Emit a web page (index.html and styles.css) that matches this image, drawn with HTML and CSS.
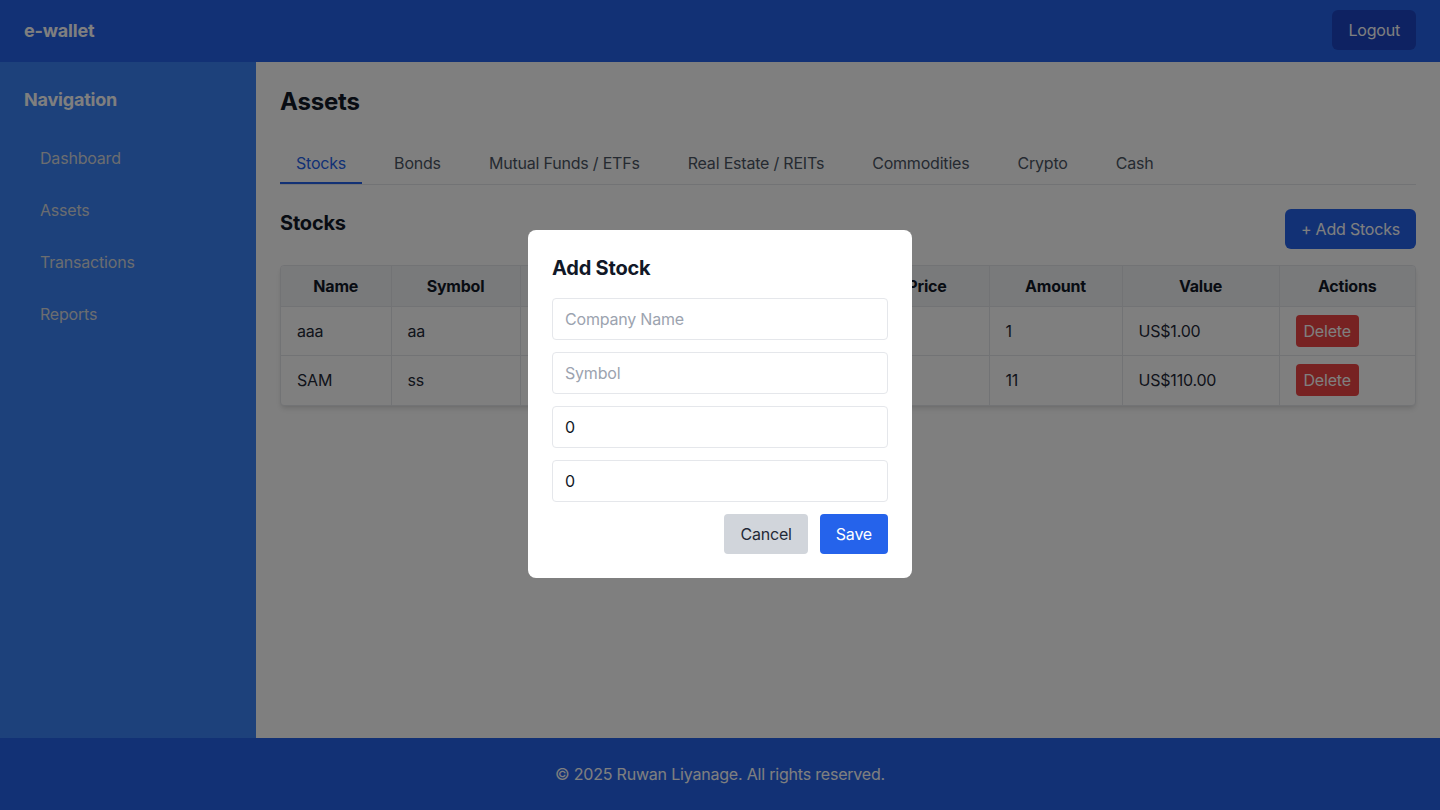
FILE: index.html
```html
<!DOCTYPE html>
<html lang="en">
<head>
<meta charset="utf-8">
<title>e-wallet</title>
<link rel="stylesheet" href="styles.css">
</head>
<body>
<div class="app">
  <header class="topbar">
    <div class="brand">e-wallet</div>
    <button class="logout">Logout</button>
  </header>
  <div class="middle">
    <aside class="sidebar">
      <h2 class="side-title">Navigation</h2>
      <nav class="side-nav">
        <a class="side-link">Dashboard</a>
        <a class="side-link">Assets</a>
        <a class="side-link">Transactions</a>
        <a class="side-link">Reports</a>
      </nav>
    </aside>
    <main class="main">
      <h1 class="page-title">Assets</h1>
      <div class="tabs">
        <div class="tab active">Stocks</div>
        <div class="tab">Bonds</div>
        <div class="tab">Mutual Funds / ETFs</div>
        <div class="tab">Real Estate / REITs</div>
        <div class="tab">Commodities</div>
        <div class="tab">Crypto</div>
        <div class="tab">Cash</div>
      </div>
      <div class="section-head">
        <h2 class="section-title">Stocks</h2>
        <button class="add-btn">+ Add Stocks</button>
      </div>
      <div class="table-wrap">
        <table class="grid">
          <colgroup>
            <col class="c-name"><col class="c-symbol"><col class="c-date"><col class="c-buy"><col class="c-price"><col class="c-amount"><col class="c-value"><col class="c-actions">
          </colgroup>
          <thead>
            <tr><th>Name</th><th>Symbol</th><th>Purchase Date</th><th>Purchase Price</th><th>Price</th><th>Amount</th><th>Value</th><th>Actions</th></tr>
          </thead>
          <tbody>
            <tr><td>aaa</td><td>aa</td><td>2025-01-01</td><td>US$1.00</td><td>1</td><td>1</td><td>US$1.00</td><td><button class="del">Delete</button></td></tr>
            <tr><td>SAM</td><td>ss</td><td>2025-01-01</td><td>US$10.00</td><td>10</td><td>11</td><td>US$110.00</td><td><button class="del">Delete</button></td></tr>
          </tbody>
        </table>
      </div>
    </main>
  </div>
  <footer class="footer">© 2025 Ruwan Liyanage. All rights reserved.</footer>
</div>
<div class="overlay">
  <div class="modal">
    <h3 class="modal-title">Add Stock</h3>
    <div class="fields">
      <input class="field" placeholder="Company Name">
      <input class="field" placeholder="Symbol">
      <input class="field" value="0">
      <input class="field" value="0">
    </div>
    <div class="modal-actions">
      <button class="btn cancel">Cancel</button>
      <button class="btn save">Save</button>
    </div>
  </div>
</div>
</body>
</html>
```
FILE: styles.css
```css
* { box-sizing: border-box; }
html, body { margin: 0; padding: 0; }
body {
  font-family: Inter, "Noto Sans", "Liberation Sans", sans-serif;
  font-size: 16px;
  line-height: 24px;
  letter-spacing: -0.2px;
  color: #1f2937;
  background: #ffffff;
}
button, input { font-family: inherit; font-size: 16px; line-height: 24px; letter-spacing: -0.2px; }
h1, h2, h3 { margin: 0; }

.app { display: flex; flex-direction: column; min-height: 810px; }

.topbar {
  height: 62px;
  background: #2563eb;
  display: flex;
  align-items: center;
  justify-content: space-between;
  padding: 0 24px;
}
.brand { color: #ffffff; font-size: 18px; line-height: 28px; font-weight: 700; }
.logout {
  background: #1d45c4;
  color: #ffffff;
  border: 0;
  border-radius: 6px;
  padding: 8px 16px;
  height: 40px;
  margin-top: -2px;
}

.middle { flex: 1; display: flex; }

.sidebar {
  width: 256px;
  background: #3b82f6;
  padding: 24px;
}
.side-title { color: #ffffff; font-size: 18px; line-height: 28px; font-weight: 700; margin-bottom: 24px; }
.side-nav { display: flex; flex-direction: column; gap: 12px; }
.side-link { color: #d6dae0; padding: 8px 16px; display: block; }

.main { flex: 1; background: #ffffff; padding: 24px; }
.page-title { font-size: 24px; line-height: 32px; font-weight: 700; color: #111827; margin-bottom: 24px; }

.tabs { display: flex; gap: 16px; border-bottom: 1px solid #e5e7eb; }
.tab { padding: 9px 16px 7px; border-bottom: 2px solid transparent; color: #4b5563; }
.tab.active { color: #2563eb; border-bottom-color: #2563eb; }

.section-head { display: flex; justify-content: space-between; margin-top: 24px; margin-bottom: 16px; }
.section-title { font-size: 20px; line-height: 28px; font-weight: 700; color: #111827; }
.add-btn {
  background: #2563eb;
  color: #ffffff;
  border: 0;
  border-radius: 6px;
  padding: 8px 16px;
  height: 40px;
}

.table-wrap {
  border: 1px solid #e5e7eb;
  border-radius: 4px;
  box-shadow: 0 4px 6px -1px rgba(0,0,0,0.1), 0 2px 4px -2px rgba(0,0,0,0.1);
  overflow: hidden;
  background: #ffffff;
}
.grid { width: 100%; border-collapse: collapse; table-layout: fixed; }
.c-name { width: 110px; }
.c-symbol { width: 129px; }
.c-date { width: 172px; }
.c-buy { width: 173px; }
.c-price { width: 124px; }
.c-amount { width: 133px; }
.c-value { width: 157px; }
.c-actions { width: 136px; }
.grid th, .grid td {
  padding: 8px 16px;
  border: 1px solid #e5e7eb;
  white-space: nowrap;
  overflow: hidden;
}
.grid tr:first-child th { border-top: 0; }
.grid th:first-child, .grid td:first-child { border-left: 0; }
.grid th:last-child, .grid td:last-child { border-right: 0; }
.grid tr:last-child td { border-bottom: 0; }
.grid th { background: #f3f4f6; font-weight: 700; color: #111827; text-align: center; }
.grid td { text-align: left; color: #1f2937; height: 49px; }
.del {
  background: #ef4444;
  color: #ffffff;
  border: 0;
  border-radius: 4px;
  padding: 4px 8px;
}

.footer {
  background: #2563eb;
  color: #ffffff;
  text-align: center;
  padding: 24px;
  height: 72px;
}

.overlay {
  position: fixed;
  inset: 0;
  background: rgba(0,0,0,0.5);
  display: flex;
  align-items: center;
  justify-content: center;
}
.modal {
  width: 384px;
  background: #ffffff;
  border-radius: 8px;
  padding: 24px;
  margin-bottom: 2px;
}
.modal-title { font-size: 20px; line-height: 28px; font-weight: 700; color: #111827; margin-bottom: 16px; }
.fields { display: flex; flex-direction: column; gap: 12px; }
.field {
  width: 100%;
  height: 42px;
  border: 1px solid #e5e7eb;
  border-radius: 4px;
  padding: 8px 12px;
  color: #111827;
  outline: none;
}
.field::placeholder { color: #9ca3af; }
.modal-actions { display: flex; justify-content: flex-end; gap: 12px; margin-top: 12px; }
.btn { border: 0; border-radius: 4px; padding: 8px 16px; height: 40px; }
.cancel { background: #d1d5db; color: #1f2937; }
.save { background: #2563eb; color: #ffffff; }
```
